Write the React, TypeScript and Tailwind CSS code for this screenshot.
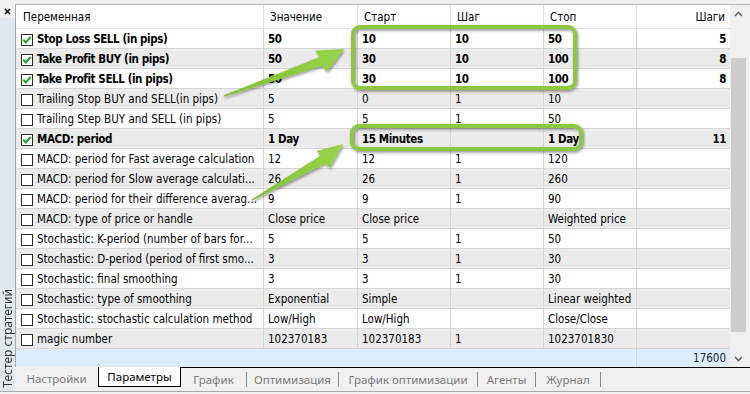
import React from "react";

type Row = { name: string; on?: boolean; v: string; a: string; s: string; e: string; n?: string };

const rows: Row[] = [
  { name: "Stop Loss SELL (in pips)", on: true, v: "50", a: "10", s: "10", e: "50", n: "5" },
  { name: "Take Profit BUY (in pips)", on: true, v: "50", a: "30", s: "10", e: "100", n: "8" },
  { name: "Take Profit SELL (in pips)", on: true, v: "50", a: "30", s: "10", e: "100", n: "8" },
  { name: "Trailing Stop BUY and SELL(in pips)", v: "5", a: "0", s: "1", e: "10" },
  { name: "Trailing Step BUY and SELL (in pips)", v: "5", a: "5", s: "1", e: "50" },
  { name: "MACD: period", on: true, v: "1 Day", a: "15 Minutes", s: "", e: "1 Day", n: "11" },
  { name: "MACD: period for Fast average calculation", v: "12", a: "12", s: "1", e: "120" },
  { name: "MACD: period for Slow average calculati...", v: "26", a: "26", s: "1", e: "260" },
  { name: "MACD: period for their difference averag...", v: "9", a: "9", s: "1", e: "90" },
  { name: "MACD: type of price or handle", v: "Close price", a: "Close price", s: "", e: "Weighted price" },
  { name: "Stochastic: K-period (number of bars for...", v: "5", a: "5", s: "1", e: "50" },
  { name: "Stochastic: D-period (period of first smo...", v: "3", a: "3", s: "1", e: "30" },
  { name: "Stochastic: final smoothing", v: "3", a: "3", s: "1", e: "30" },
  { name: "Stochastic: type of smoothing", v: "Exponential", a: "Simple", s: "", e: "Linear weighted" },
  { name: "Stochastic: stochastic calculation method", v: "Low/High", a: "Low/High", s: "", e: "Close/Close" },
  { name: "magic number", v: "102370183", a: "102370183", s: "1", e: "1023701830" },
];

function Check({ on }: { on?: boolean }) {
  return (
    <span className="w-[12px] h-[12px] border border-[#2a2a2a] bg-white flex items-center justify-center shrink-0">
      {on && (
        <svg width="10" height="10" viewBox="0 0 10 10">
          <path d="M1.3 4.6 L3.8 7.4 L8.8 1.8" stroke="#1e9e1e" strokeWidth="2" fill="none" />
        </svg>
      )}
    </span>
  );
}

function Chevron({ up }: { up?: boolean }) {
  return (
    <svg width="9" height="6" viewBox="0 0 9 6">
      <path d={up ? "M1 5 L4.5 1.5 L8 5" : "M1 1 L4.5 4.5 L8 1"} stroke="#606060" strokeWidth="1.6" fill="none" />
    </svg>
  );
}

function Overlay() {
  return (
    <svg className="absolute inset-0 pointer-events-none" width="750" height="394" viewBox="0 0 750 394">
      <defs>
        <filter id="sh" x="-20%" y="-50%" width="140%" height="200%">
          <feDropShadow dx="1" dy="1.5" stdDeviation="1.6" floodColor="#000" floodOpacity="0.45" />
        </filter>
        <linearGradient id="ag1" x1="225" y1="95" x2="344" y2="49" gradientUnits="userSpaceOnUse">
          <stop offset="0" stopColor="#7fbf35" />
          <stop offset="1" stopColor="#98d448" />
        </linearGradient>
        <linearGradient id="ag2" x1="252" y1="200" x2="343" y2="144" gradientUnits="userSpaceOnUse">
          <stop offset="0" stopColor="#7fbf35" />
          <stop offset="1" stopColor="#98d448" />
        </linearGradient>
      </defs>
      <g filter="url(#sh)">
        <rect x="353" y="27" width="222" height="61" rx="7" fill="none" stroke="#8dc73f" strokeWidth="4" />
        <rect x="352" y="126" width="229" height="23" rx="7" fill="none" stroke="#8dc73f" strokeWidth="4" />
        <polygon
          points="223.8,95.3 319.6,57.1 315.4,50.7 344,49 326.8,71.9 322.6,65.5 224.2,96.7"
          fill="url(#ag1)"
        />
        <polygon
          points="251.6,199.4 320.7,155.6 316.5,151 343,144 329.5,168 325.3,163.4 252.4,200.6"
          fill="url(#ag2)"
        />
      </g>
    </svg>
  );
}

const cellBase = "h-[20px] pt-[2px] border-r border-b border-[#d6d6d6] flex items-center overflow-hidden whitespace-nowrap";

export default function App() {
  return (
    <div className="w-[750px] h-[394px] bg-[#f0f0f0] relative overflow-hidden flex flex-col font-['DejaVu_Sans_Condensed','DejaVu_Sans',sans-serif] text-[11.5px] text-black">
      <div className="flex h-[391px]">
        {/* left side panel */}
        <div className="w-[15px] flex flex-col">
          <div className="h-[18px] bg-[#f0f0f0] flex items-start justify-center pt-[8px]">
            <svg width="7" height="7" viewBox="0 0 7 7">
              <path d="M1 1 L6 6 M6 1 L1 6" stroke="#111" strokeWidth="1.6" />
            </svg>
          </div>
          <div className="flex-1 bg-[#e3e8ee] flex flex-col justify-end items-center pb-[3px]">
            <span className="[writing-mode:vertical-rl] rotate-180 font-['Noto_Sans',sans-serif] text-[12px] leading-[16px] text-[#333]">
              Тестер стратегий
            </span>
          </div>
        </div>

        <div className="flex-1 flex flex-col">
          <div className="h-[5px] border-b border-[#b4b4b4] bg-[#f0f0f0]" />
          <div className="flex h-[362px]">
            {/* table */}
            <div className="w-[715px] border-l border-[#a8a8a8] bg-white grid grid-cols-[248px_94px_93px_93px_93px_93px] auto-rows-min content-start">
              {["Переменная", "Значение", "Старт", "Шаг", "Стоп"].map((h, i) => (
                <div
                  key={h}
                  className={`h-[24px] pt-[2px] border-r border-b border-[#e2e2e2] flex items-center ${i === 0 ? "pl-[7px]" : "pl-[6px]"}`}
                >
                  {h}
                </div>
              ))}
              <div className="h-[24px] pt-[2px] border-b border-[#e2e2e2] flex items-center justify-end pr-[5px]">Шаги</div>

              {rows.map((r, i) => {
                const bg = i % 2 === 0 ? "bg-white" : "bg-[#ebebeb]";
                const wt = r.on ? "font-bold tracking-[-0.4px]" : "font-normal";
                return (
                  <React.Fragment key={r.name}>
                    <div className={`${cellBase} ${bg} ${wt} pl-[5px] gap-[4px]`}>
                      <Check on={r.on} />
                      <span>{r.name}</span>
                    </div>
                    <div className={`${cellBase} ${bg} ${wt} pl-[4px]`}>{r.v}</div>
                    <div className={`${cellBase} ${bg} ${wt} pl-[4px]`}>{r.a}</div>
                    <div className={`${cellBase} ${bg} ${wt} pl-[4px]`}>{r.s}</div>
                    <div className={`${cellBase} ${bg} ${wt} pl-[4px]`}>{r.e}</div>
                    <div className={`h-[20px] pt-[2px] border-b border-[#d6d6d6] flex items-center justify-end pr-[4px] ${bg} ${wt}`}>
                      {r.n ?? ""}
                    </div>
                  </React.Fragment>
                );
              })}

              <div className="col-span-5 h-[18px] bg-[#ddedfb] border-r border-[#d0d8e0]" />
              <div className="h-[18px] pt-[2px] bg-[#ddedfb] flex items-center justify-end pr-[4px] text-[#1c1c44]">17600</div>
            </div>

            {/* scrollbar */}
            <div className="w-[20px] bg-[#f0f0f0] flex flex-col">
              <div className="h-[17px] w-[17px] flex items-center justify-center">
                <Chevron up />
              </div>
              <div className="h-[36px]" />
              <div className="h-[274px] w-[15px] ml-[1px] bg-[#cdcdcd]" />
              <div className="flex-1" />
              <div className="h-[17px] w-[17px] flex items-center justify-center">
                <Chevron />
              </div>
            </div>
          </div>

          {/* tab bar */}
          <div className="h-[24px] flex font-['Noto_Sans',sans-serif] text-[11.5px] text-[#7a7a7a]">
            <div className="w-[83px] flex items-center justify-center">Настройки</div>
            <div className="w-[83px] h-[20px] bg-white border-l border-r border-b border-black flex items-center justify-center text-black">
              Параметры
            </div>
            <div className="flex-1 border-t border-black flex items-center">
              <div className="w-[65px] text-center">График</div>
              <div className="w-px h-[15px] bg-[#8a8a8a]" />
              <div className="w-[91px] text-center">Оптимизация</div>
              <div className="w-px h-[15px] bg-[#8a8a8a]" />
              <div className="w-[138px] text-center">График оптимизации</div>
              <div className="w-px h-[15px] bg-[#8a8a8a]" />
              <div className="w-[57px] text-center">Агенты</div>
              <div className="w-px h-[15px] bg-[#8a8a8a]" />
              <div className="w-[64px] text-center">Журнал</div>
              <div className="w-px h-[15px] bg-[#8a8a8a]" />
            </div>
          </div>
        </div>
      </div>
      <div className="h-px bg-[#a8a8a8]" />
      <div className="flex-1 bg-[#f0f0f0]" />
      <Overlay />
    </div>
  );
}
